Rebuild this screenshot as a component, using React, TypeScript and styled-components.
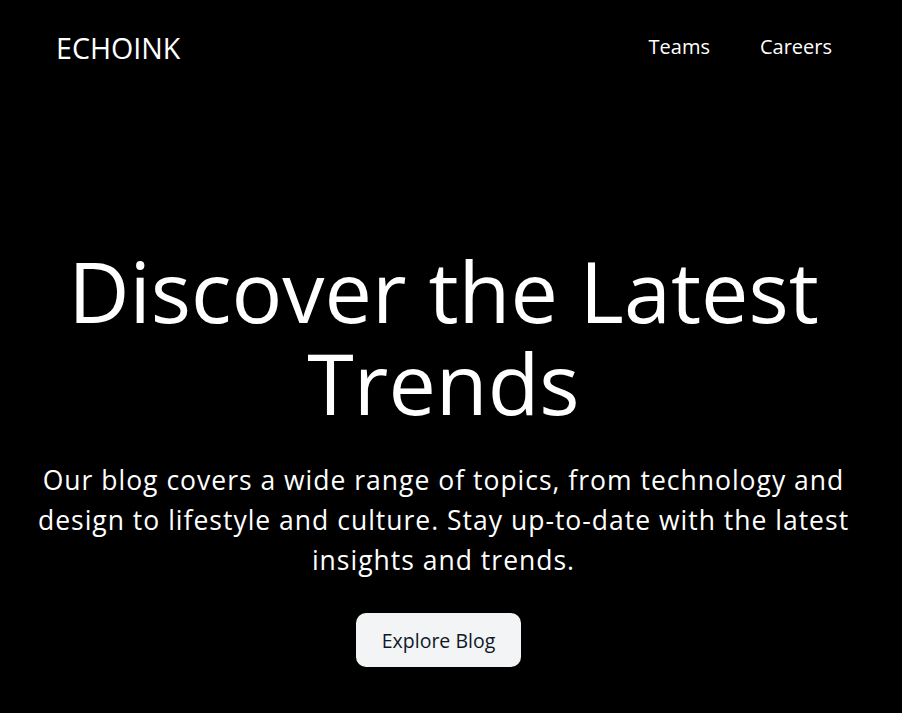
import styled, { createGlobalStyle } from "styled-components";

const GlobalStyle = createGlobalStyle`
  html, body {
    margin: 0;
    padding: 0;
    background: #000;
  }
  body {
    font-family: "Open Sans", "Noto Sans", sans-serif;
    color: #fff;
  }
`;

const Page = styled.div`
  min-height: 713px;
  padding-right: 15px;
  background: #000;
  display: flex;
  flex-direction: column;
`;

const Header = styled.header`
  display: flex;
  justify-content: space-between;
  align-items: center;
  padding: 25px 55px 0 56px;
  height: 44px;
`;

const Logo = styled.div`
  font-size: 28.6px;
  margin-top: 1px;
`;

const Nav = styled.nav`
  display: flex;
  gap: 50px;
  margin-top: -2px;
`;

const NavLink = styled.a`
  color: #fff;
  font-size: 20px;
  text-decoration: none;
`;

const Hero = styled.section`
  display: flex;
  flex-direction: column;
  align-items: center;
  text-align: center;
  padding-top: 176px;
`;

const Title = styled.h1`
  margin: 0;
  font-size: 84.5px;
  line-height: 92px;
  font-weight: 400;
  max-width: 800px;
`;

const Lead = styled.p`
  margin: 31px 0 0;
  font-size: 26.5px;
  line-height: 40px;
  letter-spacing: 1px;
  max-width: 820px;
`;

const Button = styled.button`
  margin: 33px 10px 0 0;
  width: 165px;
  height: 54px;
  border: none;
  border-radius: 10px;
  background: #f3f4f6;
  color: #111827;
  font-family: inherit;
  font-size: 19.5px;
  cursor: pointer;
`;

export default function App() {
  return (
    <Page>
      <GlobalStyle />
      <Header>
        <Logo>ECHOINK</Logo>
        <Nav>
          <NavLink href="#">Teams</NavLink>
          <NavLink href="#">Careers</NavLink>
        </Nav>
      </Header>
      <Hero>
        <Title>Discover the Latest Trends</Title>
        <Lead>
          Our blog covers a wide range of topics, from technology and design to
          lifestyle and culture. Stay up-to-date with the latest insights and
          trends.
        </Lead>
        <Button>Explore Blog</Button>
      </Hero>
    </Page>
  );
}
